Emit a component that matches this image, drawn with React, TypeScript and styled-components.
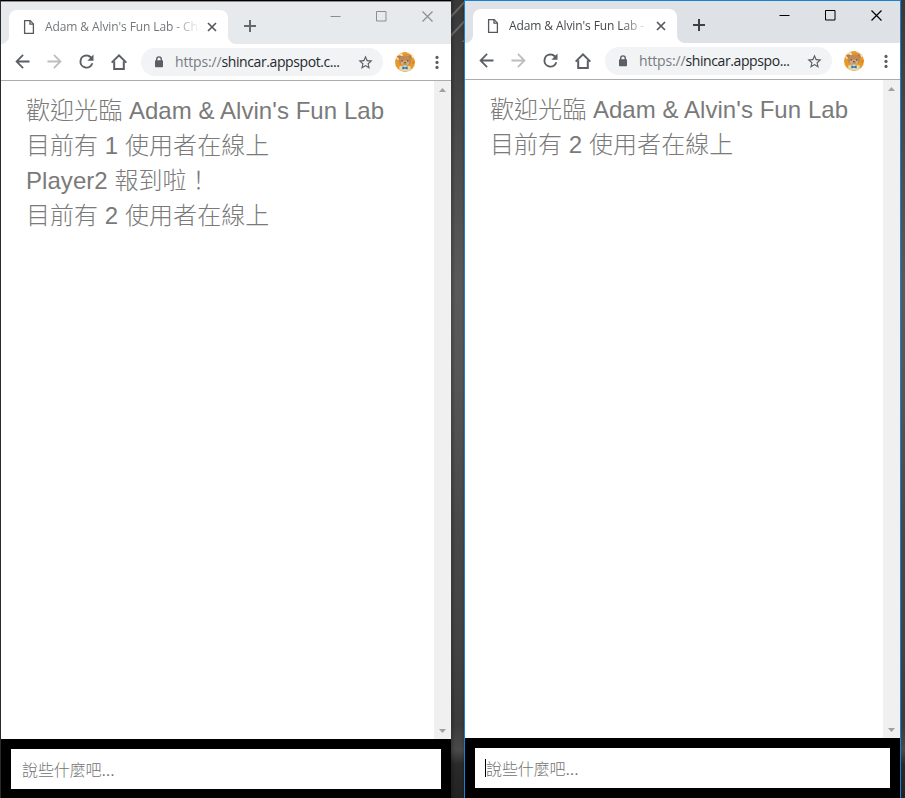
import React from "react";
import styled, { createGlobalStyle, css } from "styled-components";

const GlobalStyle = createGlobalStyle`
  * { box-sizing: border-box; }
  html, body { margin: 0; padding: 0; overflow: hidden; }
`;

const uiFont = css`
  font-family: "Open Sans", "Noto Sans", "Noto Sans CJK TC", sans-serif;
`;

const Desktop = styled.main`
  width: 905px;
  height: 798px;
  display: grid;
  grid-template-columns: 451px 13px 437px 4px;
  background: #000;
  overflow: hidden;
`;

const Wallpaper = styled.div<{ $striped?: boolean }>`
  background:
    ${(p) =>
      p.$striped
        ? `linear-gradient(90deg, rgba(0,0,0,0.22), transparent 35%, transparent 80%, rgba(0,0,0,0.15)),
           repeating-linear-gradient(133deg, transparent 0 10px, rgba(255,255,255,0.3) 11px, transparent 13px) 0 0 / 13px 42px no-repeat,`
        : ""}
    linear-gradient(180deg, #383838 0, #404040 60px, #4c4c4c 150px, #5a5a5a 290px, #565656 380px,
      #484848 530px, #434343 640px, #3b3b3b 725px, #4a4a4a 750px, #2a2a2a 764px, #222 798px);
`;

const Frame = styled.section<{ $active: boolean }>`
  display: flex;
  flex-direction: column;
  min-width: 0;
  background: #fff;
  border-style: solid;
  ${(p) =>
    p.$active
      ? css`
          border-color: #1a80d0;
          border-width: 1px 1px 0 1px;
        `
      : css`
          border-color: #000 transparent transparent #2b2b2b;
          border-width: 1px 0 0 1px;
          box-shadow: inset 0 1px #8d8d8d;
          padding-top: 1px;
        `}
`;

const TabStrip = styled.header<{ $active: boolean }>`
  height: 42px;
  flex: none;
  display: flex;
  padding: 8px 0 0 8px;
  background: ${(p) => (p.$active ? "#dee1e6" : "#e7eaed")};
`;

const Tab = styled.div<{ $width: number }>`
  position: relative;
  width: ${(p) => p.$width}px;
  height: 34px;
  flex: none;
  display: flex;
  align-items: center;
  padding: 0 10px 0 14px;
  background: #fff;
  border-radius: 8px 8px 0 0;
  &::before,
  &::after {
    content: "";
    position: absolute;
    bottom: 0;
    width: 8px;
    height: 8px;
  }
  &::before {
    left: -8px;
    background: radial-gradient(circle at 0 0, transparent 7.5px, #fff 8.5px);
  }
  &::after {
    right: -8px;
    background: radial-gradient(circle at 100% 0, transparent 7.5px, #fff 8.5px);
  }
`;

const TabTitle = styled.span<{ $active: boolean }>`
  ${uiFont}
  flex: 1;
  min-width: 0;
  margin: 0 6px 0 10px;
  font-size: 12px;
  line-height: 18px;
  letter-spacing: -0.1px;
  white-space: nowrap;
  overflow: hidden;
  color: ${(p) => (p.$active ? "#45494d" : "#73777b")};
  mask-image: linear-gradient(90deg, #000 calc(100% - 28px), transparent);
`;

const NewTab = styled.div`
  width: 28px;
  height: 32px;
  margin-left: 8px;
  display: grid;
  place-items: center;
`;

const WindowControls = styled.div`
  display: flex;
  height: 30px;
  margin: -8px 0 0 auto;
`;

const Control = styled.div`
  width: 46px;
  height: 29px;
  display: grid;
  align-items: center;
  justify-items: start;
  padding-left: 17px;
`;

const Toolbar = styled.nav`
  height: 37px;
  flex: none;
  display: flex;
  align-items: center;
  padding-left: 6px;
  border-bottom: 1px solid #acacac;
`;

const ToolButton = styled.div`
  width: 32px;
  height: 32px;
  flex: none;
  display: grid;
  place-items: center;
  padding: 0 1px 1px 0;
`;

const ProfileButton = styled.div`
  width: 20px;
  height: 20px;
  flex: none;
  display: grid;
`;

const MenuButton = styled.div`
  width: 28px;
  height: 32px;
  flex: none;
  margin-left: 8px;
  display: grid;
  place-items: center;
`;

const AddressBar = styled.div`
  ${uiFont}
  flex: 1;
  min-width: 0;
  height: 28px;
  margin: 0 12px 0 6px;
  padding: 0 9px 0 13px;
  display: flex;
  align-items: center;
  border-radius: 14px;
  background: #f1f3f4;
  font-size: 14px;
  line-height: 20px;
  color: #25282c;
`;

const Address = styled.span`
  flex: 1;
  margin-left: 11px;
  white-space: nowrap;
  letter-spacing: -0.41px;
`;

const Scheme = styled.span`
  color: #777b80;
  letter-spacing: -0.15px;
`;

const Page = styled.div`
  flex: 1;
  min-height: 0;
  display: flex;
  justify-content: space-between;
  background: #fff;
`;

const Messages = styled.div`
  padding: 11.6px 0 0 25px;
  font-family: "Liberation Sans", "Noto Sans CJK TC", sans-serif;
  font-size: 24px;
  font-weight: 300;
  line-height: 35.3px;
  letter-spacing: 0.05px;
  color: #7a7a7a;
  white-space: nowrap;
`;

const Message = styled.div``;

const Scrollbar = styled.div`
  width: 17px;
  flex: none;
  display: flex;
  flex-direction: column;
  justify-content: space-between;
  align-items: center;
  padding: 7px 0 6px;
  background: #f0f0f0;
`;

const Composer = styled.footer<{ $active: boolean }>`
  height: ${(p) => (p.$active ? 60 : 59)}px;
  flex: none;
  padding: 10px 10px 0;
  background: #000;
`;

const Field = styled.div`
  height: 40px;
  display: flex;
  align-items: center;
  padding-left: 10px;
  background: #fff;
  color: #727272;
  font-family: "Liberation Sans", "Noto Sans CJK TC", sans-serif;
  font-size: 16px;
  font-weight: 300;
`;

const Caret = styled.span`
  width: 1px;
  height: 18px;
  margin-right: -1px;
  background: #000;
`;

const Hint = styled.span`
  margin-left: 1px;
  letter-spacing: -0.1px;
`;

const PageIcon = () => (
  <svg width="12" height="16" viewBox="0 0 12 16" fill="none" stroke="#55585c" strokeWidth="1.3">
    <path d="M1.6 1.6h5.6l3.2 3.3v9.5H1.6z" />
    <path d="M7 1.6v3.5h3.4" />
  </svg>
);

const CloseTabIcon = () => (
  <svg width="12" height="12" viewBox="0 0 12 12" stroke="#55595d" strokeWidth="1.7">
    <path d="M2 2l8 8M10 2l-8 8" />
  </svg>
);

const PlusIcon = ({ color }: { color: string }) => (
  <svg width="14" height="14" viewBox="0 0 14 14" stroke={color} strokeWidth="2">
    <path d="M7 1v12M1 7h12" />
  </svg>
);

const ControlIcon = ({ kind, color }: { kind: "min" | "max" | "close"; color: string }) => (
  <svg width="11" height="11" viewBox="0 0 11 11" fill="none" stroke={color} strokeWidth="1">
    {kind === "min" && <path d="M0.5 5.5h10" />}
    {kind === "max" && <path d="M1 .5h9.5v9.5H1z" transform="translate(-.5 0)" />}
    {kind === "close" && <path d="M.5.5l10 10M10.5.5l-10 10" strokeWidth="1.2" />}
  </svg>
);

const GlyphIcon = ({ d, size, color = "#5b5f64" }: { d: string; size: number; color?: string }) => (
  <svg width={size} height={size} viewBox="0 0 24 24" fill={color}>
    <path d={d} />
  </svg>
);

const BACK = "M20 10.8H7.8l5.6-5.6L12 3.8 3.8 12l8.2 8.2 1.4-1.4-5.6-5.6H20z";
const FORWARD = "M4 10.8h12.2l-5.6-5.6L12 3.8l8.2 8.2-8.2 8.2-1.4-1.4 5.6-5.6H4z";
const RELOAD =
  "M17.65 6.35A7.95 7.95 0 0 0 12 4a8 8 0 1 0 7.73 10h-2.3A5.8 5.8 0 1 1 12 6.2c1.6 0 3.03.66 4.07 1.71L13 11h7V4z";
const STAR =
  "M22 9.24l-7.19-.62L12 2 9.19 8.63 2 9.24l5.46 4.73L5.82 21 12 17.27 18.18 21l-1.63-7.03zM12 15.4l-3.76 2.27 1-4.28-3.32-2.88 4.38-.38L12 6.1l1.71 4.04 4.38.38-3.32 2.88 1 4.28z";

const HomeIcon = () => (
  <svg width="18" height="18" viewBox="0 0 18 18" fill="none" stroke="#5b5f64" strokeWidth="2">
    <path d="M1.7 9.6L9 2.4l7.3 7.2" />
    <path d="M4.2 8.2V16h9.6V8.2" />
  </svg>
);

const LockIcon = () => (
  <svg width="10" height="12" viewBox="0 0 10 12">
    <path d="M2.7 5V3.2a2.3 2.3 0 0 1 4.6 0V5" fill="none" stroke="#5b5f64" strokeWidth="1.4" />
    <rect x="1" y="4.2" width="8" height="7" rx="0.8" fill="#5b5f64" />
  </svg>
);

const MoreIcon = () => (
  <svg width="4" height="15" viewBox="0 0 4 15" fill="#5b5f64">
    <circle cx="2" cy="2.4" r="1.6" />
    <circle cx="2" cy="7.4" r="1.6" />
    <circle cx="2" cy="12.4" r="1.6" />
  </svg>
);

const Avatar = () => (
  <svg width="20" height="20" viewBox="0 0 20 20">
    <circle cx="10" cy="10" r="10" fill="#e79a25" />
    <path d="M1 6Q3 2 7 1l1 3-5 4zM12 .5q5 1 7 6l-4-1-3-3z" fill="#f5e5cf" />
    <path d="M2 5l3-1M12 2l4 2M18 12l1-3" stroke="#e77d12" strokeWidth="1.5" />
    <circle cx="5.2" cy="5.5" r="2" fill="#b37b48" />
    <circle cx="14.8" cy="5.5" r="2" fill="#b37b48" />
    <ellipse cx="10" cy="8.8" rx="6.3" ry="5.4" fill="#bd8a58" />
    <ellipse cx="10" cy="11" rx="4" ry="2.4" fill="#d6b085" />
    <circle cx="7.3" cy="9" r=".8" fill="#71482b" />
    <circle cx="12.7" cy="9" r=".8" fill="#71482b" />
    <path d="M9 10.3h2l-1 1zM8 12h4" stroke="#8a5b38" strokeWidth=".6" />
    <path d="M4.3 14.4q5.7-2 11.4 0v3.7q-5.7 3-11.4 0z" fill="#e6d8b0" />
    <path d="M7.4 14.2l2.6 1.3 2.6-1.3v3.3L10 16.4l-2.6 1.1z" fill="#2774aa" />
  </svg>
);

const ScrollArrow = ({ down }: { down?: boolean }) => (
  <svg width="7" height="4" viewBox="0 0 7 4" fill="#a0a0a0">
    <path d={down ? "M0 0h7L3.5 4z" : "M0 4h7L3.5 0z"} />
  </svg>
);

interface BrowserProps {
  active: boolean;
  tabWidth: number;
  host: string;
  messages: string[];
}

const Browser = ({ active, tabWidth, host, messages }: BrowserProps) => {
  const controlColor = active ? "#000" : "#8b8d8f";
  return (
    <Frame $active={active}>
      <TabStrip $active={active}>
        <Tab $width={tabWidth}>
          <PageIcon />
          <TabTitle $active={active}>Adam &amp; Alvin's Fun Lab - Chat</TabTitle>
          <CloseTabIcon />
        </Tab>
        <NewTab>
          <PlusIcon color={active ? "#3d4145" : "#65696d"} />
        </NewTab>
        <WindowControls>
          <Control><ControlIcon kind="min" color={controlColor} /></Control>
          <Control><ControlIcon kind="max" color={controlColor} /></Control>
          <Control><ControlIcon kind="close" color={controlColor} /></Control>
        </WindowControls>
      </TabStrip>
      <Toolbar>
        <ToolButton><GlyphIcon d={BACK} size={21} /></ToolButton>
        <ToolButton><GlyphIcon d={FORWARD} size={21} color="#bdbdbf" /></ToolButton>
        <ToolButton><GlyphIcon d={RELOAD} size={21} /></ToolButton>
        <ToolButton><HomeIcon /></ToolButton>
        <AddressBar>
          <LockIcon />
          <Address><Scheme>https://</Scheme>{host}</Address>
          <GlyphIcon d={STAR} size={17} />
        </AddressBar>
        <ProfileButton><Avatar /></ProfileButton>
        <MenuButton><MoreIcon /></MenuButton>
      </Toolbar>
      <Page>
        <Messages lang="zh-Hant">
          {messages.map((text) => <Message key={text}>{text}</Message>)}
        </Messages>
        <Scrollbar>
          <ScrollArrow />
          <ScrollArrow down />
        </Scrollbar>
      </Page>
      <Composer $active={active}>
        <Field lang="zh-Hant">
          {active && <Caret />}
          <Hint>說些什麼吧...</Hint>
        </Field>
      </Composer>
    </Frame>
  );
};

export default function App() {
  return (
    <>
      <GlobalStyle />
      <Desktop>
        <Browser
          active={false}
          tabWidth={219}
          host="shincar.appspot.c..."
          messages={[
            "歡迎光臨 Adam & Alvin's Fun Lab",
            "目前有 1 使用者在線上",
            "Player2 報到啦！",
            "目前有 2 使用者在線上",
          ]}
        />
        <Wallpaper $striped />
        <Browser
          active
          tabWidth={204}
          host="shincar.appspo..."
          messages={["歡迎光臨 Adam & Alvin's Fun Lab", "目前有 2 使用者在線上"]}
        />
        <Wallpaper />
      </Desktop>
    </>
  );
}
